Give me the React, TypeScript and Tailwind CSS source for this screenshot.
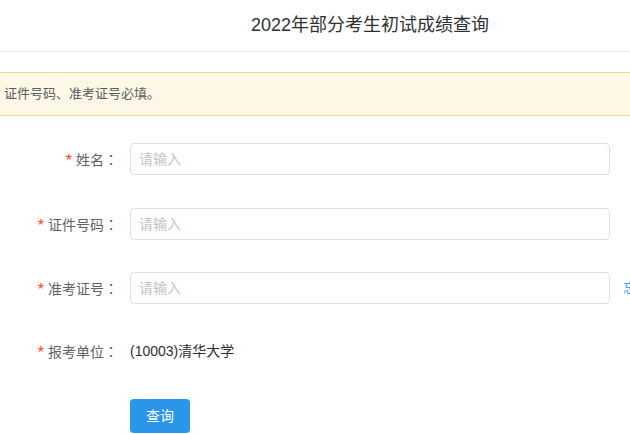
const fields = [
  { label: "姓名", input: true },
  { label: "证件号码", input: true },
  { label: "准考证号", input: true, link: "忘记准考证号？" },
];

function Label({ text }: { text: string }) {
  return (
    <label className="w-[130px] shrink-0 pr-3 text-right text-sm text-[#606266] leading-8">
      <span className="mr-1 text-base text-[#f5442a] relative top-[1px]">*</span>
      {text}
      <span className="font-['Noto_Sans_CJK_TC',sans-serif]">：</span>
    </label>
  );
}

export default function App() {
  return (
    <div className="w-[630px] h-[434px] overflow-hidden bg-white font-['Liberation_Sans','Noto_Sans_CJK_SC',sans-serif]">
      <header className="h-[52px] border-b border-[#e8e8e8] flex items-center justify-center pl-[110px] pb-[1px]">
        <h1 className="text-lg text-[#303133] whitespace-nowrap">2022年部分考生初试成绩查询</h1>
      </header>

      <div className="mt-5 h-[44px] border-y border-[#fcd88c] bg-[#fdf7e5] flex items-center pl-1 text-[13px] text-[#5a5c61]">
        证件号码、准考证号必填。
      </div>

      <form className="mt-[27px]">
        {fields.map((f, i) => (
          <div
            key={f.label}
            className={`flex items-center h-8 ${i === 0 ? "mb-[33px]" : i === 1 ? "mb-8" : "mb-[31px]"}`}
          >
            <Label text={f.label} />
            <input
              type="text"
              placeholder="请输入"
              className="w-[480px] h-8 shrink-0 rounded border border-[#dcdfe6] px-2 text-sm text-[#606266] placeholder:text-[#c0c4cc] outline-none"
            />
            {f.link && (
              <a className="ml-[13px] shrink-0 whitespace-nowrap text-sm text-[#409eff]">{f.link}</a>
            )}
          </div>
        ))}

        <div className="flex items-center mb-8 h-8">
          <Label text="报考单位" />
          <span className="text-sm text-[#303133]">(10003)清华大学</span>
        </div>

        <div className="pl-[130px]">
          <button
            type="button"
            className="w-[60px] h-[34px] rounded bg-[#2b95e9] text-sm text-white"
          >
            查询
          </button>
        </div>
      </form>
    </div>
  );
}
